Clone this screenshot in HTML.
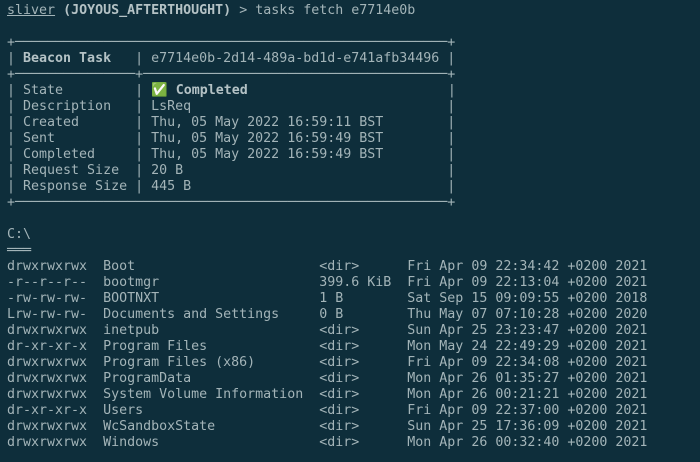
<!DOCTYPE html>
<html><head><meta charset="utf-8"><style>
html,body{margin:0;padding:0;}
body{width:700px;height:462px;overflow:hidden;background:#0e2e3b;}
pre{margin:0;position:absolute;left:7px;top:3px;font-family:"DejaVu Sans Mono","Liberation Mono",monospace;font-size:13.3px;line-height:16px;color:#a3b4b8;white-space:pre;}
b{font-weight:bold;color:#b4c2c5}
u{text-decoration:underline}
.g{color:#cfe6c0}
</style></head><body>
<pre><u>sliver</u> <b>(JOYOUS_AFTERTHOUGHT)</b> &gt; tasks fetch e7714e0b

+──────────────────────────────────────────────────────+
| <b>Beacon Task</b>   | e7714e0b-2d14-489a-bd1d-e741afb34496 |
+───────────────+──────────────────────────────────────+
| State         | <span class="g">✅</span> <b>Completed</b>                         |
| Description   | LsReq                                |
| Created       | Thu, 05 May 2022 16:59:11 BST        |
| Sent          | Thu, 05 May 2022 16:59:49 BST        |
| Completed     | Thu, 05 May 2022 16:59:49 BST        |
| Request Size  | 20 B                                 |
| Response Size | 445 B                                |
+──────────────────────────────────────────────────────+

C:\
═══
drwxrwxrwx  Boot                       &lt;dir&gt;      Fri Apr 09 22:34:42 +0200 2021
-r--r--r--  bootmgr                    399.6 KiB  Fri Apr 09 22:13:04 +0200 2021
-rw-rw-rw-  BOOTNXT                    1 B        Sat Sep 15 09:09:55 +0200 2018
Lrw-rw-rw-  Documents and Settings     0 B        Thu May 07 07:10:28 +0200 2020
drwxrwxrwx  inetpub                    &lt;dir&gt;      Sun Apr 25 23:23:47 +0200 2021
dr-xr-xr-x  Program Files              &lt;dir&gt;      Mon May 24 22:49:29 +0200 2021
drwxrwxrwx  Program Files (x86)        &lt;dir&gt;      Fri Apr 09 22:34:08 +0200 2021
drwxrwxrwx  ProgramData                &lt;dir&gt;      Mon Apr 26 01:35:27 +0200 2021
drwxrwxrwx  System Volume Information  &lt;dir&gt;      Mon Apr 26 00:21:21 +0200 2021
dr-xr-xr-x  Users                      &lt;dir&gt;      Fri Apr 09 22:37:00 +0200 2021
drwxrwxrwx  WcSandboxState             &lt;dir&gt;      Sun Apr 25 17:36:09 +0200 2021
drwxrwxrwx  Windows                    &lt;dir&gt;      Mon Apr 26 00:32:40 +0200 2021</pre>
</body></html>
